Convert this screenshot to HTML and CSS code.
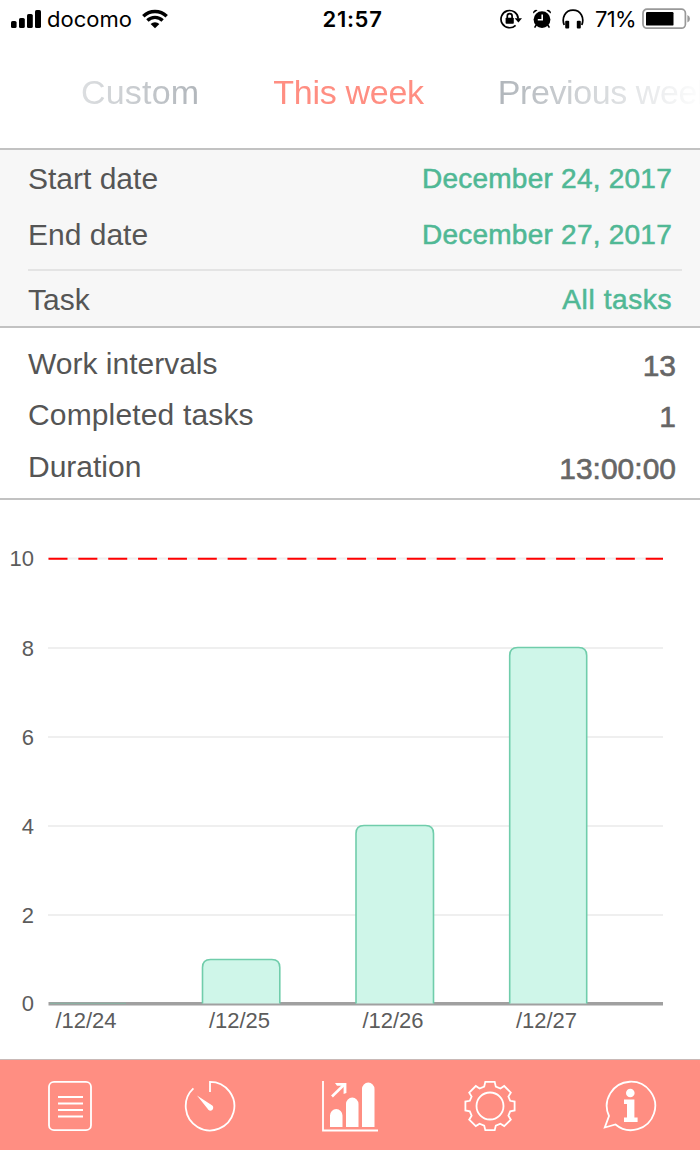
FILE: index.html
```
<!DOCTYPE html>
<html lang="en">
  <head>
    <meta charset="UTF-8" />
    <meta name="viewport" content="width=device-width, initial-scale=1.0" />
    <title>Statistics</title>
    <link rel="stylesheet" href="styles.css" />
  </head>
  <body>
    <div class="app">
      <header class="status-bar">
        <div class="status-left">
          <svg class="signal" width="30" height="20" viewBox="0 0 30 20">
            <rect x="0" y="12" width="5.6" height="7" rx="1.6" />
            <rect x="8" y="9" width="5.8" height="10" rx="1.6" />
            <rect x="16" y="5" width="5.8" height="14" rx="1.6" />
            <rect x="24" y="1" width="6" height="18" rx="1.6" />
          </svg>
          <span class="carrier">docomo</span>
          <svg class="wifi" width="26" height="20" viewBox="0 0 26 20">
            <path d="M1.3 7.2A16.8 16.8 0 0 1 24.7 7.2" />
            <path d="M5.4 11.4A11 11 0 0 1 20.6 11.4" />
            <path class="solid" d="M13 19.2L8.6 14.9A6.5 6.5 0 0 1 17.4 14.9Z" />
          </svg>
        </div>
        <span class="clock">21:57</span>
        <div class="status-right">
          <svg width="22" height="20" viewBox="0 0 22 20">
            <path class="line" d="M15.6 16.3A8.6 8.6 0 1 1 18.2 9.6" />
            <path d="M14.6 9.2H22L18.4 13.4Z" />
            <rect x="5.6" y="8.8" width="8.2" height="6" rx="0.8" />
            <path class="line" d="M7.3 9V7A2.4 2.4 0 0 1 12.1 7V9" />
          </svg>
          <svg width="18" height="20" viewBox="0 0 18 20">
            <circle cx="9" cy="10.6" r="8.4" />
            <path d="M0.2 4.6A3 3 0 0 1 4.6 1.2ZM17.8 4.6A3 3 0 0 0 13.4 1.2Z" />
            <path d="M3.2 16L1.6 18.6M14.8 16L16.4 18.6" stroke="#000" stroke-width="1.6" />
            <path class="hand" d="M9.2 5.6V10.8H4.8" />
          </svg>
          <svg width="22" height="20" viewBox="0 0 22 20">
            <path class="line" d="M2.2 16C-0.6 9 3 1.2 11 1.2S22.6 9 19.8 16" />
            <rect x="3.2" y="11.8" width="4" height="7.6" rx="1" />
            <rect x="14.8" y="11.8" width="4" height="7.6" rx="1" />
          </svg>
          <span class="percent">71%</span>
          <svg class="battery" width="49" height="22" viewBox="0 0 49 22">
            <rect class="shell" x="1" y="1.2" width="42.4" height="19" rx="4" />
            <rect x="4" y="4" width="27.5" height="13.6" rx="1.2" />
            <path class="cap" d="M45.4 7Q48 8 48 10.7T45.4 14.4Z" />
          </svg>
        </div>
      </header>

      <nav class="tabs">
        <a class="tab">Custom</a>
        <a class="tab active">This week</a>
        <a class="tab next">Previous week</a>
      </nav>

      <section class="filters">
        <div class="row start">
          <span>Start date</span>
          <span class="value">December 24, 2017</span>
        </div>
        <div class="row end">
          <span>End date</span>
          <span class="value">December 27, 2017</span>
        </div>
        <div class="row task">
          <span>Task</span>
          <span class="value all">All tasks</span>
        </div>
      </section>

      <section class="stats">
        <div class="row">
          <span>Work intervals</span>
          <span class="number">13</span>
        </div>
        <div class="row completed">
          <span>Completed tasks</span>
          <span class="number">1</span>
        </div>
        <div class="row">
          <span>Duration</span>
          <span class="number">13:00:00</span>
        </div>
      </section>

      <section class="chart">
        <svg width="700" height="559" viewBox="0 500 700 559">
          <g class="grid">
            <path d="M48 558.5H663M48 648H663M48 737H663M48 826H663M48 915H663" />
          </g>
          <path class="goal" d="M48.5 558.8H663" />
          <path class="axis" d="M48.5 1003.7H663" />
          <path class="zero" d="M50 1003.3H126" />
          <g class="bars">
            <path d="M202.5 1003.5V967.5Q202.5 959.5 210.5 959.5H271.8Q279.8 959.5 279.8 967.5V1003.5" />
            <path d="M356 1003.5V833.5Q356 825.5 364 825.5H425.5Q433.5 825.5 433.5 833.5V1003.5" />
            <path d="M509.7 1003.5V655.5Q509.7 647.5 517.7 647.5H578.7Q586.7 647.5 586.7 655.5V1003.5" />
          </g>
          <g class="labels y">
            <text x="34" y="566">10</text>
            <text x="34" y="656">8</text>
            <text x="34" y="745">6</text>
            <text x="34" y="834">4</text>
            <text x="34" y="923">2</text>
            <text x="34" y="1011">0</text>
          </g>
          <g class="labels x">
            <text x="86" y="1028">/12/24</text>
            <text x="239.5" y="1028">/12/25</text>
            <text x="393" y="1028">/12/26</text>
            <text x="546.5" y="1028">/12/27</text>
          </g>
        </svg>
      </section>

      <footer class="tab-bar">
        <a class="item">
          <svg width="56" height="54" viewBox="0 0 56 54">
            <rect x="7" y="2.8" width="42" height="48.4" rx="5" />
            <path d="M16 18H41M16 24.5H41M16 31H41M16 37.5H41" />
          </svg>
        </a>
        <a class="item">
          <svg width="56" height="54" viewBox="0 0 56 54">
            <path d="M28 13V2.8A24.3 24.3 0 1 1 11.4 9.4" />
            <path class="fill" d="M15 16.4L30.3 26.6A2.9 2.9 0 1 1 25.6 29.7Z" />
          </svg>
        </a>
        <a class="item">
          <svg width="58" height="54" viewBox="0 0 58 54">
            <path d="M2 2V51.5H57" />
            <path d="M11 17.5L23.3 5.5" stroke-width="2.6" />
            <path class="fill" d="M14 4H25.4V14L22.6 15V6.8H16Z" />
            <path class="fill" d="M9 48V36.5A6.25 6.5 0 0 1 21.5 36.5V48ZM25 48V25A6.25 6.5 0 0 1 37.5 25V48ZM41 48V10A6.25 6.5 0 0 1 53.5 10V48Z" />
          </svg>
        </a>
        <a class="item">
          <svg width="56" height="54" viewBox="0 0 56 54">
            <path d="M23.3 2.8H32.7L33.8 7.6L38.4 9.5L42.2 7L48.8 13.6L46.4 17.5L48.2 21.8L52.6 22.5V31.5L48.2 32.4L46.4 36.7L48.8 40.7L42.2 47.1L38.4 44.7L33.8 46.6L32.7 51.2H23.3L22.2 46.6L17.6 44.7L13.8 47.1L7.2 40.7L9.6 36.7L7.8 32.4L3.4 31.5V22.5L7.8 21.8L9.6 17.5L7.2 13.6L13.8 7L17.6 9.5L22.2 7.6Z" />
            <circle cx="28" cy="27" r="13.5" />
          </svg>
        </a>
        <a class="item">
          <svg width="56" height="54" viewBox="0 0 56 54">
            <path d="M7 37A24.2 24.2 0 1 1 13.5 45.5L2.8 48.5Z" />
            <circle class="fill" cx="28.3" cy="14" r="4.3" />
            <path class="fill" d="M22 20.5H32.4V38.5H35.6V43H22V38.5H25V25H22Z" />
          </svg>
        </a>
      </footer>
    </div>
  </body>
</html>
```
FILE: styles.css
```
:root {
  --coral: #ff8e82;
  --green: #50b895;
  --text-color: #555;
  --line: #c2c2c2;
}

*,
*::before,
*::after {
  box-sizing: border-box;
}

body {
  margin: 0;
  overflow: hidden;
  background-color: #fff;
  color: var(--text-color);
  font-family: "Liberation Sans", Arial, sans-serif;
}

svg {
  display: block;
}

.app {
  display: flex;
  flex-direction: column;
  width: 700px;
  height: 1150px;
}

/* status bar */
.status-bar {
  display: grid;
  grid-template-columns: 1fr auto 1fr;
  align-items: center;
  height: 38px;
  padding: 0 9px 0 11px;
  color: #000;
  font-family: Inter, sans-serif;
  font-size: 22px;
}

.status-left,
.status-right {
  display: flex;
  align-items: center;
}

.status-right {
  justify-content: flex-end;
  gap: 11px;
}

.carrier {
  margin: 0 10px 0 6px;
}

.wifi path {
  fill: none;
  stroke: #000;
  stroke-width: 3.4;
}

.wifi .solid {
  fill: #000;
  stroke: none;
}

.clock {
  padding-left: 3px;
  font-weight: 600;
  letter-spacing: 0.7px;
}

.line {
  fill: none;
  stroke: #000;
  stroke-width: 1.7;
}

.hand {
  fill: none;
  stroke: #fff;
  stroke-width: 1.6;
}

.percent {
  margin-right: -5px;
  letter-spacing: -0.7px;
}

.battery .shell {
  fill: none;
  stroke: #999;
  stroke-width: 1.7;
}

.battery .cap {
  fill: #999;
}

/* period selector */
.tabs {
  display: flex;
  height: 110px;
  padding-left: 81px;
  overflow: hidden;
  white-space: nowrap;
  font-size: 34px;
  line-height: 109px;
  -webkit-mask-image: linear-gradient(to right, transparent -2%, #000 34%, #000 66%, transparent 101%);
  mask-image: linear-gradient(to right, transparent -2%, #000 34%, #000 66%, transparent 101%);
}

.tab {
  color: #a3a9af;
  letter-spacing: 0.2px;
}

.tab.active {
  margin: 0 74px 0 74px;
  color: var(--coral);
  letter-spacing: -0.3px;
}

.tab.next {
  letter-spacing: -0.4px;
}

/* summary rows */
.row {
  display: flex;
  justify-content: space-between;
  align-items: center;
  font-size: 30px;
}

.filters {
  height: 180px;
  padding-left: 28px;
  border-top: 2px solid var(--line);
  border-bottom: 2px solid var(--line);
  background-color: #f7f7f7;
}

.filters .row {
  padding-right: 28px;
}

.filters .start {
  height: 57px;
}

.filters .end {
  height: 55px;
}

.filters .task {
  height: 59px;
  margin: 7px 18px 0 0;
  padding-right: 10px;
  border-top: 2px solid #e4e4e4;
}

.value {
  color: var(--green);
  font-size: 28px;
  letter-spacing: 0.24px;
  -webkit-text-stroke: 0.55px var(--green);
}

.value.all {
  letter-spacing: 0.6px;
}

.stats {
  height: 172px;
  padding: 10px 24px 0 28px;
  border-bottom: 2px solid var(--line);
}

.stats .row {
  height: 51px;
}

.stats .completed {
  height: 52px;
  letter-spacing: 0.15px;
}

.number {
  padding-top: 4px;
  color: #666;
  -webkit-text-stroke: 0.6px #666;
}

/* chart */
.chart {
  height: 559px;
}

.grid path {
  stroke: #efefef;
  stroke-width: 2;
}

.goal {
  stroke: #f00;
  stroke-width: 2;
  stroke-dasharray: 19 10.86;
}

.axis {
  stroke: #a0a0a0;
  stroke-width: 3.6;
}

.zero {
  stroke: #86b5a3;
  stroke-width: 1;
}

.bars path {
  fill: #cff6e9;
  stroke: #70cdab;
  stroke-width: 1.6;
}

.labels {
  fill: #5c5c5c;
  font-size: 22px;
}

.labels.y {
  text-anchor: end;
}

.labels.x {
  text-anchor: middle;
}

/* bottom tab bar */
.tab-bar {
  display: flex;
  height: 91px;
  padding-top: 2px;
  border-top: 1px solid #c9b9b7;
  background-color: var(--coral);
}

.item {
  display: flex;
  flex: 1;
  align-items: center;
  justify-content: center;
}

.item svg {
  fill: none;
  stroke: #fff;
  stroke-width: 1.8;
}

.item .fill {
  fill: #fff;
  stroke: none;
}
```
